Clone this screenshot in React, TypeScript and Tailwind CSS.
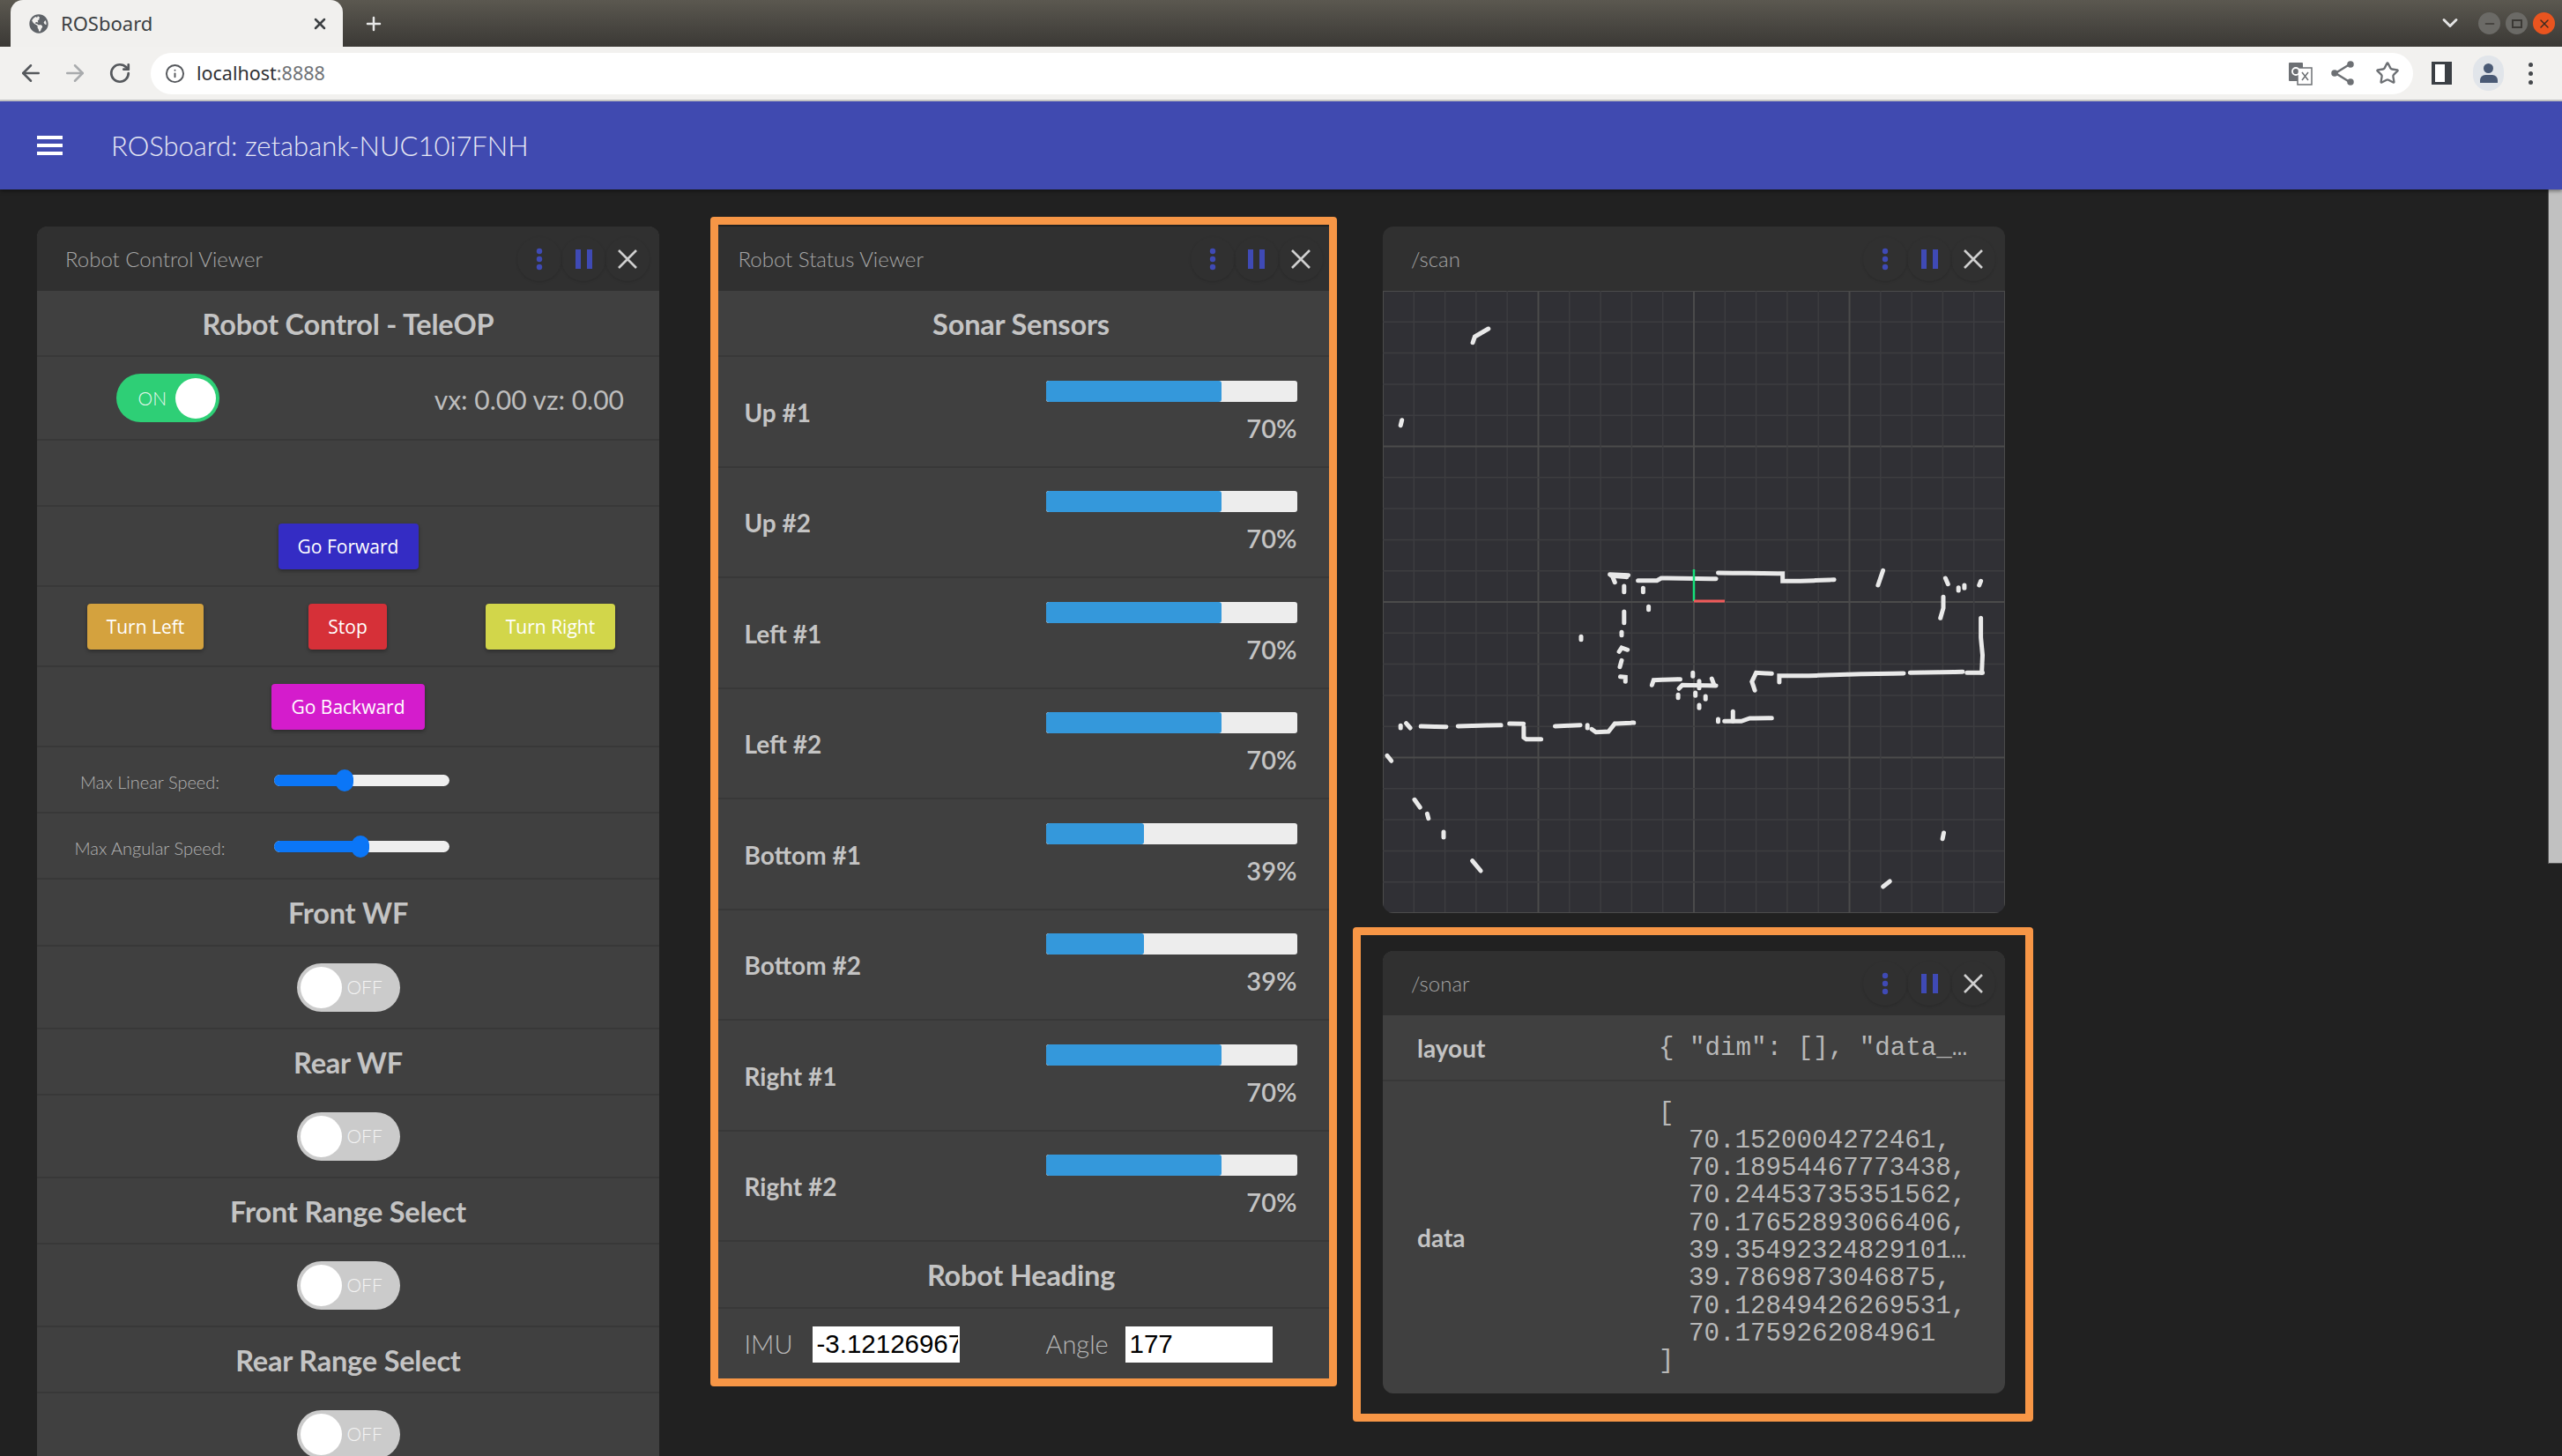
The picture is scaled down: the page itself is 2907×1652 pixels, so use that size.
import React from 'react';
import { ArrowLeft, ArrowRight, RotateCw, Info, Star, Plus, X, ChevronDown, Minus } from 'lucide-react';
import { FaGlobeAmericas } from 'react-icons/fa';

const toCanvas = (pts: number[]) => {
  const out: string[] = [];
  for (let i = 0; i < pts.length; i += 2) {
    out.push(`${(pts[i] / 2.09 - 19).toFixed(1)},${(pts[i + 1] / 3 + 290).toFixed(1)}`);
  }
  return out.join(' ');
};

const scanLines = [
  [578, 95, 622, 98], [582, 100, 618, 104], [586, 108, 590, 122],
  [645, 116, 690, 116, 700, 108, 830, 110],
  [835, 90, 988, 92, 988, 118, 1030, 118, 1110, 113],
  [612, 135, 612, 155], [657, 142, 657, 155],
  [1226, 82, 1214, 132], [1374, 108, 1380, 128],
  [1405, 140, 1405, 150], [1419, 132, 1419, 142], [1458, 118, 1454, 132],
  [1369, 172, 1369, 210, 1362, 244],
  [1458, 244, 1458, 310, 1462, 370, 1460, 430], [1425, 430, 1462, 430],
  [1290, 430, 1415, 427],
  [980, 462, 980, 440, 1050, 440, 1180, 434, 1275, 432],
  [922, 490, 915, 460, 925, 430, 962, 433],
  [670, 205, 670, 215], [612, 222, 612, 260], [606, 292, 606, 302], [510, 307, 510, 317],
  [600, 358, 606, 345, 620, 352], [602, 410, 606, 388], [603, 443, 615, 445, 615, 460],
  [678, 472, 682, 455, 745, 452],
  [742, 484, 750, 472, 830, 474], [775, 430, 775, 442], [820, 450, 825, 470], [790, 458, 790, 482],
  [740, 505, 740, 515], [781, 498, 781, 508], [805, 510, 805, 520], [790, 540, 790, 550],
  [835, 588, 835, 596], [850, 595, 890, 595, 910, 585, 962, 584], [870, 562, 870, 595],
  [82, 610, 82, 618], [95, 602, 105, 618], [130, 612, 190, 614], [218, 612, 320, 608],
  [340, 603, 375, 604], [374, 615, 374, 650, 380, 656, 415, 656],
  [448, 612, 508, 608], [525, 608, 525, 618],
  [535, 622, 545, 632, 575, 630, 590, 603, 635, 600],
  [50, 712, 60, 730], [115, 862, 128, 888], [145, 910, 148, 926], [184, 972, 184, 990],
  [252, 1070, 272, 1104], [1370, 975, 1367, 995], [1242, 1140, 1226, 1158],
  // top left strays, above the first row of the zoomed map
  [253, -694, 258, -714, 290, -741], [85, -430, 82, -412],
];

const sonars = [
  { name: 'Up #1', pct: 70 },
  { name: 'Up #2', pct: 70 },
  { name: 'Left #1', pct: 70 },
  { name: 'Left #2', pct: 70 },
  { name: 'Bottom #1', pct: 39 },
  { name: 'Bottom #2', pct: 39 },
  { name: 'Right #1', pct: 70 },
  { name: 'Right #2', pct: 70 },
];

const sonarData = [
  '70.1520004272461,',
  '70.18954467773438,',
  '70.24453735351562,',
  '70.17652893066406,',
  '39.354923248291016,',
  '39.7869873046875,',
  '70.12849426269531,',
  '70.1759262084961',
];

function PanelHeader({ title }: { title: string }) {
  return (
    <div className="h-[73px] flex items-center bg-[#303030] pl-[32px] pr-[11px] shrink-0">
      <span className="flex-1 text-[24px] font-light text-[#a6a6a6]">{title}</span>
      <button className="w-[50px] h-[50px] rounded-full shadow-[0_1px_3px_rgba(0,0,0,0.15)] flex items-center justify-center">
        <svg width="10" height="26" viewBox="0 0 10 26" fill="#3f4ab5">
          <circle cx="5" cy="4" r="3.2" />
          <circle cx="5" cy="13" r="3.2" />
          <circle cx="5" cy="22" r="3.2" />
        </svg>
      </button>
      <button className="w-[50px] h-[50px] rounded-full shadow-[0_1px_3px_rgba(0,0,0,0.15)] flex items-center justify-center">
        <span className="flex gap-[7px]">
          <span className="w-[6px] h-[22px] bg-[#3f4ab5]" />
          <span className="w-[6px] h-[22px] bg-[#3f4ab5]" />
        </span>
      </button>
      <button className="w-[50px] h-[50px] rounded-full shadow-[0_1px_3px_rgba(0,0,0,0.15)] flex items-center justify-center">
        <svg width="24" height="24" viewBox="0 0 24 24" stroke="#cfcfcf" strokeWidth="2.6">
          <path d="M2 2 L22 22 M22 2 L2 22" />
        </svg>
      </button>
    </div>
  );
}

function Row({ className, children }: { className: string; children?: React.ReactNode }) {
  return <div className={`border-b-2 border-[#383838] flex items-center ${className}`}>{children}</div>;
}

function Heading({ text, className }: { text: string; className: string }) {
  return (
    <Row className={`justify-center pt-[3px] ${className}`}>
      <span className="text-[32.5px] font-bold text-[#c4c4c4] tracking-[-0.2px]">{text}</span>
    </Row>
  );
}

function OffToggle() {
  return (
    <div className="w-[117px] h-[55px] rounded-full bg-[#cbcbcb] flex items-center pl-[4px] gap-[6px]">
      <span className="w-[47px] h-[47px] rounded-full bg-white" />
      <span className="text-[21px] text-[#f4f4f4] font-light">OFF</span>
    </div>
  );
}

function ToggleRow({ className }: { className: string }) {
  return (
    <Row className={`justify-center ${className}`}>
      <OffToggle />
    </Row>
  );
}

function TeleButton({ label, className }: { label: string; className: string }) {
  return (
    <button className={`h-[52px] pt-[2px] rounded-[4px] shadow-[0_2px_4px_rgba(0,0,0,0.35)] text-white text-[21px] font-[family-name:'Open_Sans',sans-serif] ${className}`}>
      {label}
    </button>
  );
}

function SpeedRow({ label, thumb }: { label: string; thumb: number }) {
  return (
    <Row className="h-[75px]">
      <span className="text-[20px] mt-[4px] font-light text-[#b4b4b4] text-center w-[256px] shrink-0">{label}</span>
      <div className="relative w-[199px] h-[13px] ml-[13px] mt-[2px] rounded-full bg-[#efefef] shadow-[0_0_1px_rgba(0,0,0,0.5)]">
        <div className="h-full rounded-full bg-[#0b76f7]" style={{ width: thumb }} />
        <div className="absolute top-[-6px] w-[20px] h-[25px] rounded-full bg-[#0b76f7]" style={{ left: thumb - 10 }} />
      </div>
    </Row>
  );
}

function ControlPanel() {
  return (
    <div className="w-[706px] rounded-t-[12px] overflow-hidden bg-[#404040] shrink-0">
      <PanelHeader title="Robot Control Viewer" />
      <Heading text="Robot Control - TeleOP" className="h-[75px]" />
      <Row className="h-[95px] pl-[90px] pr-[40px] justify-between">
        <div className="w-[117px] h-[55px] rounded-full bg-[#2ecf76] flex items-center justify-end pr-[4px] gap-[10px]">
          <span className="text-[21px] text-[#e8f8ee] font-light">ON</span>
          <span className="w-[46px] h-[46px] rounded-full bg-white" />
        </div>
        <span className="text-[30px] mt-[3px] text-[#bdbdbd]">vx: 0.00 vz: 0.00</span>
      </Row>
      <Row className="h-[75px]" />
      <Row className="h-[91px] justify-center">
        <TeleButton label="Go Forward" className="w-[159px] bg-[#342cc4]" />
      </Row>
      <Row className="h-[91px] pl-[57px]">
        <TeleButton label="Turn Left" className="w-[132px] bg-[#d4a23e]" />
        <TeleButton label="Stop" className="w-[89px] ml-[119px] bg-[#d63038]" />
        <TeleButton label="Turn Right" className="w-[147px] ml-[112px] bg-[#d2d64a]" />
      </Row>
      <Row className="h-[91px] justify-center">
        <TeleButton label="Go Backward" className="w-[174px] bg-[#d41ccc]" />
      </Row>
      <SpeedRow label="Max Linear Speed:" thumb={80} />
      <SpeedRow label="Max Angular Speed:" thumb={98} />
      <Heading text="Front WF" className="h-[76px]" />
      <ToggleRow className="h-[94px]" />
      <Heading text="Rear WF" className="h-[75px]" />
      <ToggleRow className="h-[94px]" />
      <Heading text="Front Range Select" className="h-[75px]" />
      <ToggleRow className="h-[94px]" />
      <Heading text="Rear Range Select" className="h-[75px]" />
      <ToggleRow className="h-[94px]" />
    </div>
  );
}

function StatusPanel() {
  return (
    <div className="relative w-[706px] rounded-t-[12px] bg-[#404040] shrink-0 h-[1310px]">
      <PanelHeader title="Robot Status Viewer" />
      <Heading text="Sonar Sensors" className="h-[75px]" />
      {sonars.map((s) => (
        <Row key={s.name} className="h-[125.5px] pl-[39px] pr-[40px] justify-between">
          <span className="text-[28px] mt-[2px] font-bold text-[#c4c4c4]">{s.name}</span>
          <div className="w-[285px] flex flex-col items-end mt-[2px]">
            <div className="w-full h-[24px] rounded-[3px] bg-[#ededed] overflow-hidden">
              <div className="h-full rounded-[3px] bg-[#3498db]" style={{ width: `${s.pct}%` }} />
            </div>
            <span className="text-[29px] font-semibold text-[#c4c4c4] mt-[12px] leading-[36px]">{s.pct}%</span>
          </div>
        </Row>
      ))}
      <Heading text="Robot Heading" className="h-[76px]" />
      <div className="flex items-center h-[80px] pl-[39px] text-[29px] font-light text-[#b9b9b9]">
        <span className="w-[77px]">IMU</span>
        <input
          readOnly
          value="-3.12126967"
          className="w-[167px] h-[41px] bg-white text-black pl-[5px] pr-[2px] text-[29.5px] font-[family-name:'Liberation_Sans',sans-serif] font-normal"
        />
        <span className="ml-[98px] w-[90px]">Angle</span>
        <input
          readOnly
          value="177"
          className="w-[167px] h-[41px] bg-white text-black pl-[5px] text-[29.5px] font-[family-name:'Liberation_Sans',sans-serif] font-normal"
        />
      </div>
      {/* orange annotation frame from the screenshot */}
      <div className="absolute left-0 top-[-11px] w-[711px] h-[1327px] border-[9px] border-[#f79646] rounded-[4px] pointer-events-none" />
    </div>
  );
}

function ScanCanvas() {
  const step = 706 / 20;
  const lines = Array.from({ length: 21 }, (_, i) => i);
  return (
    <svg viewBox="0 0 706 706" className="w-[706px] h-[706px] block bg-[#303035]">
      {lines.map((i) => (
        <g key={i} stroke={i % 5 === 0 ? '#4b4b4b' : '#3d3d40'} strokeWidth={i % 5 === 0 ? 2 : 1.5}>
          <line x1={i * step} y1={0} x2={i * step} y2={706} />
          <line x1={0} y1={i * step} x2={706} y2={i * step} />
        </g>
      ))}
      {scanLines.map((pts, i) => (
        <polyline key={i} points={toCanvas(pts)} fill="none" stroke="#e9e9e9" strokeWidth="5" strokeLinecap="round" strokeDasharray="16 1" />
      ))}
      <line x1="353" y1="352" x2="353" y2="316" stroke="#16e07a" strokeWidth="2.5" />
      <line x1="353" y1="352" x2="388" y2="352" stroke="#f05a5a" strokeWidth="3" />
    </svg>
  );
}

function ScanPanel() {
  return (
    <div className="w-[706px] rounded-[12px] overflow-hidden shrink-0">
      <PanelHeader title="/scan" />
      <ScanCanvas />
    </div>
  );
}

function SonarPanel() {
  return (
    <div className="relative w-[706px] rounded-[12px] bg-[#404040] shrink-0">
      <div className="rounded-t-[12px] overflow-hidden">
        <PanelHeader title="/sonar" />
      </div>
      <Row className="h-[75px] pl-[39px]">
        <span className="w-[274px] shrink-0 text-[28px] font-bold text-[#c4c4c4]">layout</span>
        <span className="w-[352px] mt-[2px] truncate text-[29.2px] font-[family-name:'Liberation_Mono',monospace] text-[#b8b8b8]">
          {'{ "dim": [], "data_offset": 0 }'}
        </span>
      </Row>
      <div className="h-[354px] pl-[39px] flex items-center">
        <span className="w-[274px] shrink-0 text-[28px] font-bold text-[#c4c4c4]">data</span>
        <div className="w-[350px] text-[29.2px] leading-[31.3px] font-[family-name:'Liberation_Mono',monospace] text-[#b8b8b8]">
          <div>[</div>
          {sonarData.map((line) => (
            <div key={line} className="pl-[34px] truncate">{line}</div>
          ))}
          <div>]</div>
        </div>
      </div>
      <div className="absolute left-[-34px] top-[-27px] right-[-32px] bottom-[-32px] border-[9px] border-[#f79646] rounded-[4px] pointer-events-none" />
    </div>
  );
}

function BrowserChrome() {
  return (
    <div className="font-[family-name:'Noto_Sans',sans-serif]">
      <div className="h-[53px] bg-gradient-to-b from-[#5b5850] to-[#3b3935] flex items-end pl-[12px] pr-[8px]">
        <div className="w-[377px] h-[53px] bg-[#f1f0ee] rounded-t-[14px] flex items-center pl-[21px] pr-[16px] text-[#3c4043]">
          <FaGlobeAmericas size={22} className="text-[#5f6368]" />
          <span className="ml-[14px] flex-1 text-[22px]">ROSboard</span>
          <X size={20} strokeWidth={3} />
        </div>
        <Plus size={24} strokeWidth={2.5} className="ml-[23px] mb-[14px] text-[#e8e8e8]" />
        <div className="flex-1" />
        <ChevronDown size={28} strokeWidth={2.5} className="mb-[13px] text-[#e4e4e4]" />
        <div className="flex gap-[6px] ml-[18px] mb-[14px]">
          <span className="w-[25px] h-[25px] rounded-full bg-[#6b6a66] flex items-center justify-center">
            <Minus size={16} className="text-[#3b3935]" />
          </span>
          <span className="w-[25px] h-[25px] rounded-full bg-[#6b6a66] flex items-center justify-center">
            <span className="w-[12px] h-[10px] border-2 border-[#3b3935]" />
          </span>
          <span className="w-[25px] h-[25px] rounded-full bg-[#e9541f] flex items-center justify-center">
            <X size={16} className="text-[#3b2a20]" />
          </span>
        </div>
      </div>
      <div className="h-[62px] bg-[#f2f1ef] border-b-2 border-[#c8c8c8] flex items-center pl-[20px] pr-[22px]">
        <ArrowLeft size={30} strokeWidth={2} className="text-[#55585c]" />
        <ArrowRight size={30} strokeWidth={2} className="ml-[20px] text-[#a9abad]" />
        <RotateCw size={26} strokeWidth={2.5} className="ml-[23px] text-[#55585c]" />
        <div className="ml-[22px] w-[2567px] h-[47px] bg-white rounded-full flex items-center pl-[16px] pr-[11px]">
          <Info size={23} strokeWidth={2} className="text-[#55585c]" />
          <span className="ml-[13px] text-[21.5px] text-[#2f3134]">
            localhost<span className="text-[#6f7276]">:8888</span>
          </span>
          <div className="flex-1" />
          {/* translate */}
          <svg width="30" height="30" viewBox="0 0 30 30" className="mr-[20px]">
            <rect x="2" y="3" width="16" height="21" rx="1" fill="#6d7074" />
            <rect x="12" y="9" width="16" height="19" fill="white" stroke="#6d7074" strokeWidth="1.5" />
            <circle cx="10" cy="13" r="4" fill="none" stroke="white" strokeWidth="1.8" />
            <path d="M17 14 L24 23 M24 14 L17 23" stroke="#6d7074" strokeWidth="1.5" />
          </svg>
          {/* share */}
          <svg width="28" height="30" viewBox="0 0 28 30" fill="#6d7074" stroke="#6d7074" strokeWidth="2.5" className="mr-[22px]">
            <path d="M21 5 L5 15 L21 25" fill="none" />
            <circle cx="22" cy="5" r="2.5" />
            <circle cx="4" cy="15" r="2.5" />
            <circle cx="22" cy="25" r="2.5" />
          </svg>
          <Star size={28} strokeWidth={2} className="text-[#6d7074] mr-[4px]" />
        </div>
        <div className="ml-[21px] w-[23px] h-[26px] border-[3px] border-l-[4px] border-r-[8px] border-[#3b3f44] bg-white" />
        <div className="ml-[24px] w-[35px] h-[40px] rounded-full bg-[#e1e5ea] flex flex-col items-center justify-center">
          <span className="w-[11px] h-[11px] rounded-full bg-[#4a5a75]" />
          <span className="w-[20px] h-[9px] mt-[2px] rounded-t-[6px] bg-[#4a5a75]" />
        </div>
        <div className="ml-[28px] flex flex-col gap-[5px]">
          <span className="w-[5px] h-[5px] rounded-full bg-[#45484c]" />
          <span className="w-[5px] h-[5px] rounded-full bg-[#45484c]" />
          <span className="w-[5px] h-[5px] rounded-full bg-[#45484c]" />
        </div>
      </div>
    </div>
  );
}

export default function App() {
  return (
    <div className="h-screen overflow-hidden flex flex-col bg-[#212121] font-[family-name:Lato,sans-serif]">
      <BrowserChrome />
      <div className="h-[100px] bg-[#404ab0] flex items-center pl-[42px] shrink-0 shadow-[0_2px_4px_rgba(0,0,0,0.4)] z-10">
        <div className="w-[29px] flex flex-col gap-[5px]">
          <span className="h-[4px] bg-white" />
          <span className="h-[4px] bg-white" />
          <span className="h-[4px] bg-white" />
        </div>
        <span className="ml-[55px] text-[31px] font-light text-[#e8e9f5]">ROSboard: zetabank-NUC10i7FNH</span>
      </div>
      <div className="flex-1 flex min-h-0">
        <main className="flex-1 flex items-start gap-[57.5px] pl-[42px] pt-[42px] overflow-hidden">
          <ControlPanel />
          <StatusPanel />
          <div className="flex flex-col gap-[43px] shrink-0">
            <ScanPanel />
            <SonarPanel />
          </div>
        </main>
        <div className="w-[16px] shrink-0 bg-[#212121]">
          <div className="h-[765px] bg-[#c1c1c1] border-l border-b border-[#555]" />
        </div>
      </div>
    </div>
  );
}
